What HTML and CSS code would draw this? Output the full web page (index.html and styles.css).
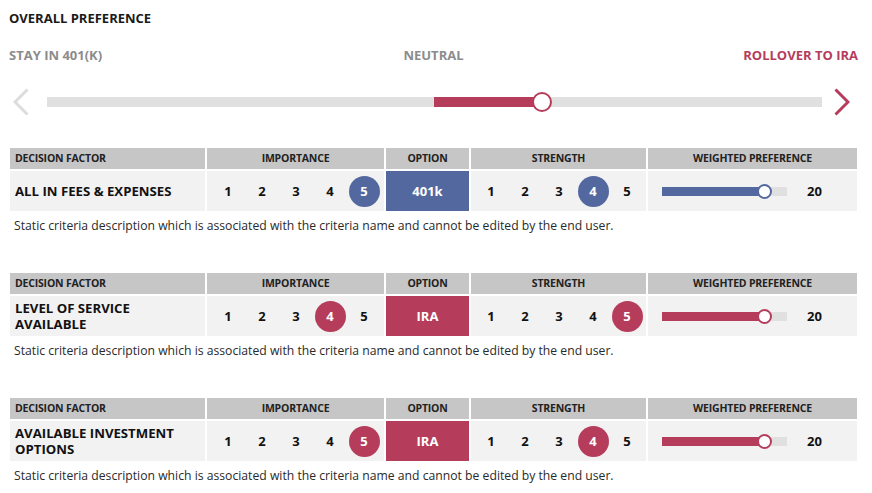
FILE: index.html
```html
<!DOCTYPE html>
<html>
<head>
<meta charset="utf-8">
<link rel="stylesheet" href="styles.css">
</head>
<body>
<div class="page">
  <div class="title">OVERALL PREFERENCE</div>
  <div class="ends">
    <span class="end-left">STAY IN 401(K)</span>
    <span class="end-mid">NEUTRAL</span>
    <span class="end-right">ROLLOVER TO IRA</span>
  </div>
  <div class="overall">
    <svg class="chev" width="16" height="28" viewBox="0 0 16 28"><polyline points="14.5,1.5 2,14 14.5,26.5" fill="none" stroke="#dcdcdc" stroke-width="3"/></svg>
    <div class="track">
      <div class="fill-red" style="left:387px;width:108px"></div>
      <div class="knob" style="left:495px"></div>
    </div>
    <svg class="chev" width="16" height="28" viewBox="0 0 16 28"><polyline points="1.5,1.5 14,14 1.5,26.5" fill="none" stroke="#b53d5b" stroke-width="3"/></svg>
  </div>

  <div class="block">
    <div class="grid">
      <div class="hd hd-left">DECISION FACTOR</div>
      <div class="hd">IMPORTANCE</div>
      <div class="hd">OPTION</div>
      <div class="hd">STRENGTH</div>
      <div class="hd">WEIGHTED PREFERENCE</div>
      <div class="cell name">ALL IN FEES &amp; EXPENSES</div>
      <div class="cell nums"><span>1</span><span>2</span><span>3</span><span>4</span><span class="sel blue">5</span></div>
      <div class="cell opt blue">401k</div>
      <div class="cell nums"><span>1</span><span>2</span><span>3</span><span class="sel blue">4</span><span>5</span></div>
      <div class="cell weight">
        <div class="wtrack"><div class="wfill blue" style="width:102px"></div><div class="wknob bk" style="left:102px"></div></div>
        <span class="wval">20</span>
      </div>
    </div>
    <p class="desc">Static criteria description which is associated with the criteria name and cannot be edited by the end user.</p>
  </div>

  <div class="block">
    <div class="grid">
      <div class="hd hd-left">DECISION FACTOR</div>
      <div class="hd">IMPORTANCE</div>
      <div class="hd">OPTION</div>
      <div class="hd">STRENGTH</div>
      <div class="hd">WEIGHTED PREFERENCE</div>
      <div class="cell name">LEVEL OF SERVICE<br>AVAILABLE</div>
      <div class="cell nums"><span>1</span><span>2</span><span>3</span><span class="sel red">4</span><span>5</span></div>
      <div class="cell opt red">IRA</div>
      <div class="cell nums"><span>1</span><span>2</span><span>3</span><span>4</span><span class="sel red">5</span></div>
      <div class="cell weight">
        <div class="wtrack"><div class="wfill red" style="width:102px"></div><div class="wknob rk" style="left:102px"></div></div>
        <span class="wval">20</span>
      </div>
    </div>
    <p class="desc">Static criteria description which is associated with the criteria name and cannot be edited by the end user.</p>
  </div>

  <div class="block">
    <div class="grid">
      <div class="hd hd-left">DECISION FACTOR</div>
      <div class="hd">IMPORTANCE</div>
      <div class="hd">OPTION</div>
      <div class="hd">STRENGTH</div>
      <div class="hd">WEIGHTED PREFERENCE</div>
      <div class="cell name">AVAILABLE INVESTMENT<br>OPTIONS</div>
      <div class="cell nums"><span>1</span><span>2</span><span>3</span><span>4</span><span class="sel red">5</span></div>
      <div class="cell opt red">IRA</div>
      <div class="cell nums"><span>1</span><span>2</span><span>3</span><span class="sel red">4</span><span>5</span></div>
      <div class="cell weight">
        <div class="wtrack"><div class="wfill red" style="width:102px"></div><div class="wknob rk" style="left:102px"></div></div>
        <span class="wval">20</span>
      </div>
    </div>
    <p class="desc">Static criteria description which is associated with the criteria name and cannot be edited by the end user.</p>
  </div>
</div>
</body>
</html>
```

FILE: styles.css
```css
* { box-sizing: border-box; }
body {
  margin: 0;
  background: #fff;
  font-family: "Open Sans", "Noto Sans", sans-serif;
  color: #1a1a1a;
}
.page {
  padding: 8px 14px 0 9px;
  width: 872px;
}
.title {
  font-size: 13px;
  font-weight: 700;
  line-height: 20px;
}
.ends {
  margin-top: 17px;
  display: grid;
  grid-template-columns: 1fr auto 1fr;
  font-size: 13px;
  font-weight: 700;
  line-height: 20px;
}
.end-left { color: #8c8c8c; }
.end-mid { color: #8c8c8c; }
.end-right { color: #b53d5b; text-align: right; }

.overall {
  margin-top: 22px;
  height: 30px;
  display: flex;
  align-items: center;
  padding-left: 4px;
}
.chev { flex: none; display: block; }
.track {
  position: relative;
  width: 775px;
  height: 10px;
  background: #e0e0e0;
  margin: 0 12px 0 18px;
}
.fill-red {
  position: absolute;
  top: 0;
  height: 10px;
  background: #b53d5b;
}
.knob {
  position: absolute;
  top: 50%;
  width: 20px;
  height: 20px;
  margin: -10px 0 0 -10px;
  border-radius: 50%;
  background: #fff;
  border: 2.5px solid #b53d5b;
}

.block { margin-top: 31px; }
.block + .block { margin-top: 39px; }
.grid {
  display: grid;
  grid-template-columns: 195px 177px 83px 175px 209px;
  column-gap: 2px;
  row-gap: 2px;
  margin-left: 1px;
}
.hd {
  background: #c6c6c6;
  height: 21px;
  font-size: 10.5px;
  font-weight: 700;
  line-height: 21px;
  text-align: center;
  color: #222;
  letter-spacing: -0.2px;
}
.hd-left { text-align: left; padding-left: 5px; }
.cell {
  background: #f2f2f2;
  height: 40px;
  display: flex;
  align-items: center;
}
.name {
  padding-left: 5px;
  font-size: 13.2px;
  font-weight: 700;
  line-height: 16px;
  color: #111;
}
.nums {
  justify-content: center;
  gap: 3px;
  padding-left: 1px;
}
.nums span {
  width: 31px;
  height: 31px;
  display: flex;
  align-items: center;
  justify-content: center;
  font-size: 13px;
  font-weight: 700;
  color: #111;
}
.nums span.sel { border-radius: 50%; color: #fff; }
.blue { background: #5468a0; }
.red { background: #b53d5b; }
.opt {
  justify-content: center;
  color: #fff;
  font-size: 13px;
  font-weight: 700;
}
.weight { padding-left: 14px; }
.wtrack {
  position: relative;
  width: 125px;
  height: 9px;
  background: #e0e0e0;
}
.wfill { height: 9px; }
.wknob {
  position: absolute;
  top: 50%;
  width: 15px;
  height: 15px;
  margin: -7.5px 0 0 -7.5px;
  border-radius: 50%;
  background: #fff;
}
.wknob.bk { border: 2px solid #5468a0; }
.wknob.rk { border: 2px solid #b53d5b; }
.wval {
  margin-left: 20px;
  font-size: 13px;
  font-weight: 700;
  color: #111;
}
.desc {
  margin: 6px 0 0 5px;
  font-size: 12.2px;
  line-height: 18px;
  color: #2a2a2a;
}
.block + .block { margin-top: 38px; }
```
